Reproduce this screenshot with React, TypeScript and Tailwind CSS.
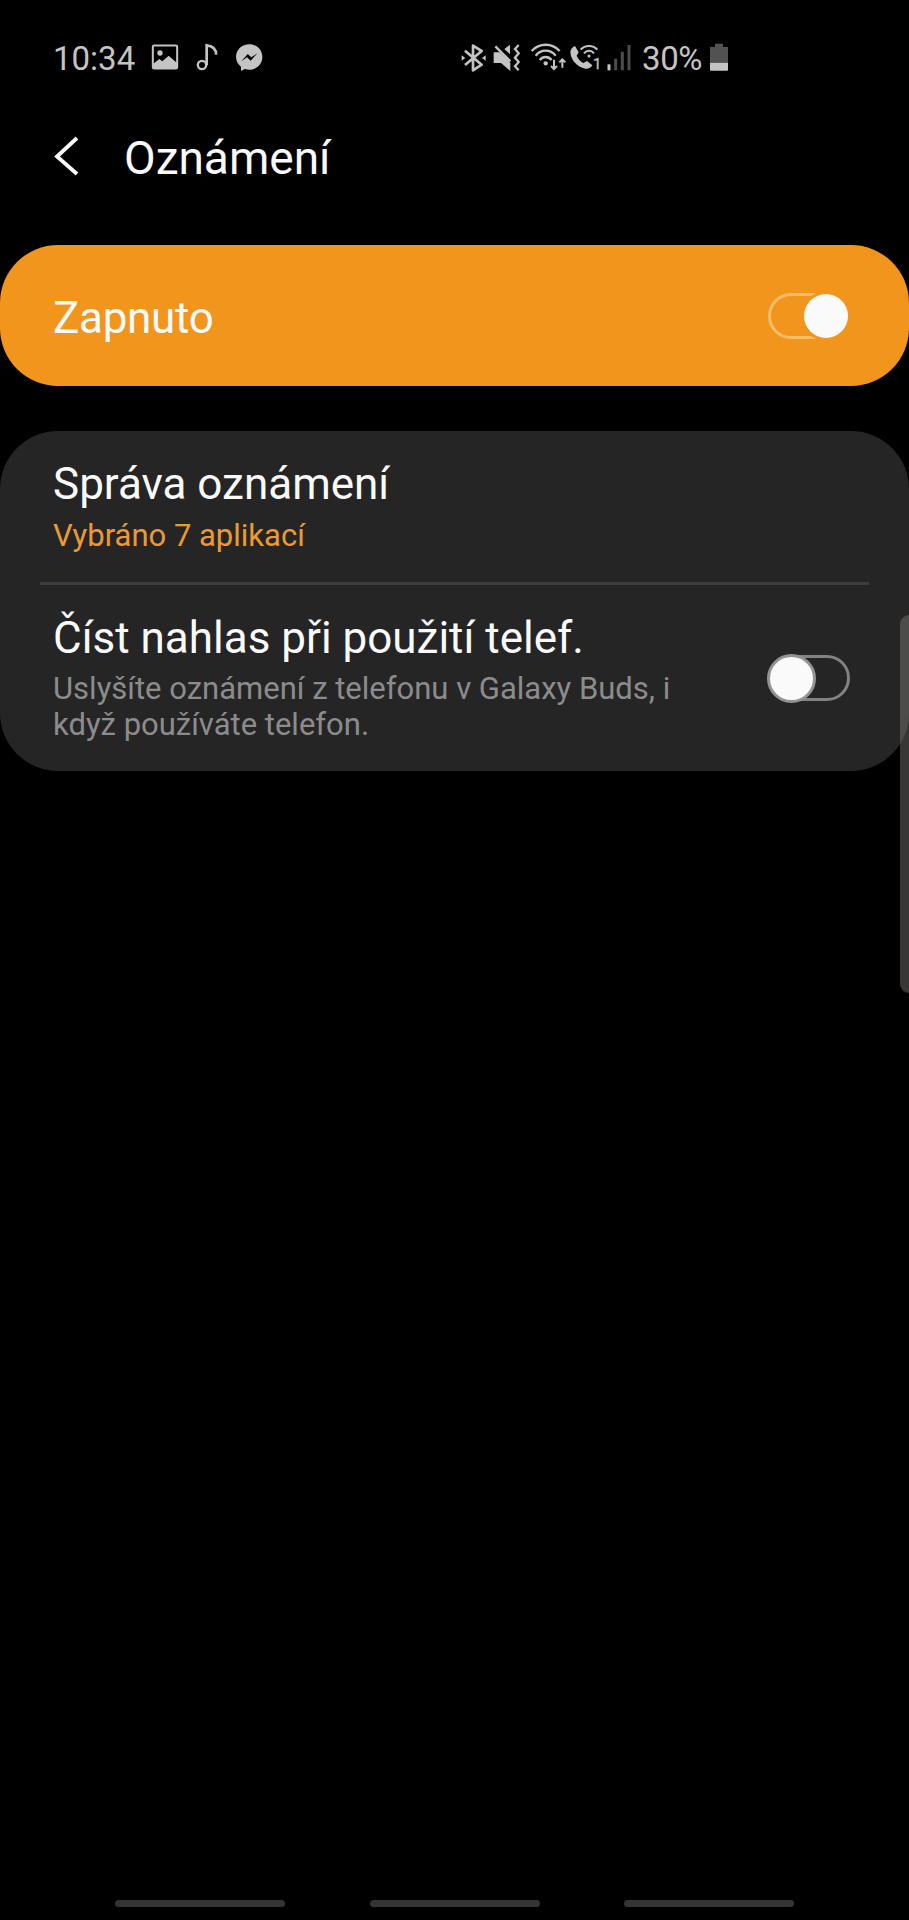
import { useState } from 'react';
import type { ReactNode } from 'react';

type IconProps = { className: string; viewBox: string; children: ReactNode };

function StatusIcon({ className, viewBox, children }: IconProps) {
  return (
    <svg className={`h-[35px] shrink-0 ${className}`} viewBox={viewBox} fill="none" stroke="#c4c4c4">
      {children}
    </svg>
  );
}

function StatusBar() {
  return (
    <div className="flex h-[35px] items-center text-[33px] leading-[35px] text-[#c4c4c4]">
      <span className="w-[150px] shrink-0 pt-[2px] pl-[53px]">10:34</span>

      {/* Gallery */}
      <StatusIcon className="w-[30px]" viewBox="330 30 90 105">
        <rect x="338.500" y="46.500" width="73" height="69" rx="4" strokeWidth="6" />
        <circle cx="360" cy="69" r="8" fill="#c4c4c4" stroke="none" />
        <path d="M340 101 L358 87 L367 94 L386 77 L411 99 V115 H340Z" fill="#c4c4c4" stroke="none" />
      </StatusIcon>
      {/* Music */}
      <StatusIcon className="ml-[15px] w-[24px]" viewBox="466 30 72 105">
        <circle cx="487" cy="105" r="12.500" strokeWidth="7" />
        <path d="M501 106 V46 C518 48 530 57 529 74" strokeWidth="8" />
      </StatusIcon>
      {/* Messenger */}
      <StatusIcon className="ml-[15px] w-[30px]" viewBox="582 30 90 105">
        <path
          d="M628 43 C606 43 588 59 588 81 C588 93 594 103 603 110 V123 L615 117 C619 118 623 119 628 119 C650 119 667 102 667 81 C667 59 650 43 628 43Z"
          fill="#c4c4c4"
          stroke="none"
        />
        <path d="M604 94 L623 72 L634 82 L652 70 L632 92 L621 82Z" fill="#000" stroke="none" />
      </StatusIcon>

      <div className="ml-[196px] flex items-center">
        {/* Bluetooth */}
        <StatusIcon className="w-[30px]" viewBox="30 30 90 105">
          <path d="M45 62 L95 104 L69 121 V47 L95 63 L45 105" strokeWidth="8" strokeLinejoin="round" />
          <path d="M35 76 L46 84 L35 92Z M107 76 L96 84 L107 92Z" fill="#c4c4c4" stroke="none" />
        </StatusIcon>
        {/* Vibrate */}
        <StatusIcon className="w-[35px]" viewBox="120 30 105 105">
          <path d="M131 67 H149 L181 98 V123 L153 99 H131Z M163 57 L180 44 V73Z" fill="#c4c4c4" stroke="none" />
          <path d="M136 49 L181 94" strokeWidth="7" />
          <path d="M206 45 L195 57 L206 70 L195 83 L206 96 L195 109 L206 121" strokeWidth="7" />
        </StatusIcon>
        {/* Wifi */}
        <StatusIcon className="w-[44px]" viewBox="225 30 132 105">
          <path d="M245 63 C268 38 306 38 329 63" strokeWidth="7" />
          <path d="M257 77 C273 57 301 57 317 77" strokeWidth="7" />
          <path d="M269 90 C279 78 295 78 305 90" strokeWidth="7" />
          <circle cx="287" cy="100" r="6.500" fill="#c4c4c4" stroke="none" />
          <path d="M312 89 V116 M303 108 L312 117 L321 108 M337 113 V88 M328 97 L337 88 L346 97" strokeWidth="6" />
        </StatusIcon>
        {/* Wifi calling */}
        <StatusIcon className="w-[34px]" viewBox="357 30 102 105">
          <path
            d="M375 48 L386 67 L380 77 C384 87 391 94 400 99 L411 93 L427 106 C423 114 414 117 406 116 C381 111 363 91 361 67 C361 58 367 51 375 48Z"
            fill="#c4c4c4"
            stroke="none"
          />
          <path d="M392 59 C405 44 429 44 442 59" strokeWidth="6" />
          <path d="M402 70 C410 60 424 60 432 70" strokeWidth="6" />
          <circle cx="417" cy="78" r="4.500" fill="#c4c4c4" stroke="none" />
          <text x="429" y="116" fontSize="45" fill="#c4c4c4" stroke="#c4c4c4">
            1
          </text>
        </StatusIcon>
        {/* Signal */}
        <StatusIcon className="w-[32px]" viewBox="459 30 96 105">
          <path d="M477 121 V103" strokeWidth="9" />
          <path d="M497 121 V86 M517 121 V65 M537 121 V45" stroke="#4c4c4c" strokeWidth="9" />
        </StatusIcon>
      </div>

      <span className="ml-[7px] w-[67px] pt-[2px] tracking-[-0.4px]">30%</span>
      {/* Battery */}
      <StatusIcon className="w-[20px]" viewBox="777 30 60 105">
        <path d="M795 41 H819 V51 H834 V98 H780 V51 H795Z" fill="#525252" stroke="none" />
        <path d="M780 98 H834 V119 Q834 122 831 122 H783 Q780 122 780 119Z" fill="#c4c4c4" stroke="none" />
      </StatusIcon>
    </div>
  );
}

function Toggle({ on, onChange }: { on: boolean; onChange: (value: boolean) => void }) {
  return (
    <button
      role="switch"
      aria-checked={on}
      onClick={() => onChange(!on)}
      className={`flex h-[46px] w-[82px] shrink-0 items-center rounded-full border-[3px] ${
        on ? 'justify-end border-[#f9bd69]' : 'border-[#838181]'
      }`}
    >
      <span
        className={`shrink-0 rounded-full bg-[#fafafa] ${
          on
            ? '-mr-[1px] size-[44px] shadow-[0_0_0_3px_#f2951d]'
            : '-ml-[4px] size-[49px] border-[3px] border-[#949292]'
        }`}
      />
    </button>
  );
}

export default function App() {
  const [enabled, setEnabled] = useState<boolean>(true);
  const [readAloud, setReadAloud] = useState<boolean>(false);

  return (
    <div className="relative flex h-[1920px] w-[909px] flex-col overflow-hidden bg-black pt-[40px] font-['Roboto',sans-serif] text-[#fafafa]">
      <StatusBar />

      <header className="mt-[52px] flex h-[60px] items-center pl-[54px]">
        <svg className="-mt-[3px] h-[40px] w-[26px]" viewBox="0 0 26 40" fill="none" stroke="#fafafa" strokeWidth="3.8">
          <path d="M23 2 L3 20.500 L23 38" />
        </svg>
        <h1 className="ml-[44px] pt-[2px] text-[46px] leading-[52px]">Oznámení</h1>
      </header>

      <section className="mt-[58px] flex h-[141px] items-center justify-between rounded-[58px] bg-[#f2951d] pr-[59px] pl-[53px]">
        <span className="pt-1 text-[44px] leading-[52px] tracking-[-0.3px]">Zapnuto</span>
        <Toggle on={enabled} onChange={setEnabled} />
      </section>

      <section className="mt-[45px] h-[340px] rounded-[58px] bg-[#252525]">
        <div className="h-[151px] pt-[27px] pl-[53px]">
          <h2 className="text-[44px] leading-[52px]">Správa oznámení</h2>
          <p className="mt-[8px] text-[31px] leading-[36px] text-[#eb9a34]">Vybráno 7 aplikací</p>
        </div>
        <hr className="mx-10 h-[3px] border-0 bg-[#3d3d3d]" />
        <div className="flex justify-between pt-[27px] pr-[59px] pl-[53px]">
          <div>
            <h2 className="text-[44px] leading-[52px]">Číst nahlas při použití telef.</h2>
            <p className="mt-[7px] text-[31px] leading-[36px] text-[#8c8c8c]">
              Uslyšíte oznámení z telefonu v Galaxy Buds, i<br />
              když používáte telefon.
            </p>
          </div>
          <div className="pt-[43px]">
            <Toggle on={readAloud} onChange={setReadAloud} />
          </div>
        </div>
      </section>

      {/* Edge panel handle */}
      <div className="absolute top-[615px] right-0 h-[378px] w-[9px] rounded-l-[9px] bg-[#82807e]/43" />

      <nav className="mt-auto flex justify-between px-[115px] pb-[13px]">
        <span className="h-[7px] w-[170px] rounded-full bg-[#343434]" />
        <span className="h-[7px] w-[170px] rounded-full bg-[#343434]" />
        <span className="h-[7px] w-[170px] rounded-full bg-[#343434]" />
      </nav>
    </div>
  );
}
